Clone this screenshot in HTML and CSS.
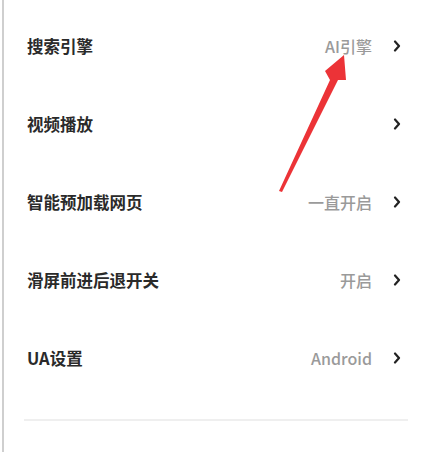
FILE: index.html
```html
<!DOCTYPE html>
<html lang="zh-CN">
<head>
<meta charset="utf-8">
<link rel="stylesheet" href="styles.css">
</head>
<body>
<div class="page">
  <ul class="list">
    <li class="row"><span class="label">搜索引擎</span><span class="value">AI引擎</span><svg class="chev" viewBox="0 0 8 12"><polyline points="2,1.5 6,6 2,10.5"/></svg></li>
    <li class="row"><span class="label">视频播放</span><span class="value"></span><svg class="chev" viewBox="0 0 8 12"><polyline points="2,1.5 6,6 2,10.5"/></svg></li>
    <li class="row"><span class="label">智能预加载网页</span><span class="value">一直开启</span><svg class="chev" viewBox="0 0 8 12"><polyline points="2,1.5 6,6 2,10.5"/></svg></li>
    <li class="row"><span class="label">滑屏前进后退开关</span><span class="value">开启</span><svg class="chev" viewBox="0 0 8 12"><polyline points="2,1.5 6,6 2,10.5"/></svg></li>
    <li class="row"><span class="label">UA设置</span><span class="value">Android</span><svg class="chev" viewBox="0 0 8 12"><polyline points="2,1.5 6,6 2,10.5"/></svg></li>
  </ul>
  <div class="divider"></div>
  <svg class="arrow" viewBox="0 0 428 452" width="428" height="452">
    <polygon points="279,191 330,80 325,71 344,55 346,80 338,80 282,192" />
  </svg>
</div>
</body>
</html>
```
FILE: styles.css
```css
html, body {
  margin: 0;
  padding: 0;
  background: #fff;
}
body {
  padding-left: 2px;
  font-family: "Noto Sans CJK SC", "Noto Sans", sans-serif;
}
.page {
  position: relative;
  height: 452px;
  border-left: 2px solid #cfcfcf;
  box-sizing: border-box;
  padding-top: 7px;
}
.list {
  list-style: none;
  margin: 0;
  padding: 0 27px 0 23px;
}
.row {
  display: flex;
  align-items: center;
  height: 78px;
}
.label {
  flex: 1;
  font-size: 16.5px;
  font-weight: 700;
  color: #2a2a2a;
  letter-spacing: 0;
}
.value {
  font-size: 16px;
  font-weight: 500;
  color: #9a9a9a;
  margin-right: 21px;
}
.chev {
  width: 8px;
  height: 12px;
  fill: none;
  stroke: #222;
  stroke-width: 2.2;
  stroke-linecap: round;
  stroke-linejoin: round;
}
.divider {
  margin: 22px 20px 0 20px;
  height: 2px;
  background: #efefef;
}
.arrow {
  position: absolute;
  left: -4px;
  top: 0;
  pointer-events: none;
}
.arrow polygon {
  fill: #ec3337;
}
```
